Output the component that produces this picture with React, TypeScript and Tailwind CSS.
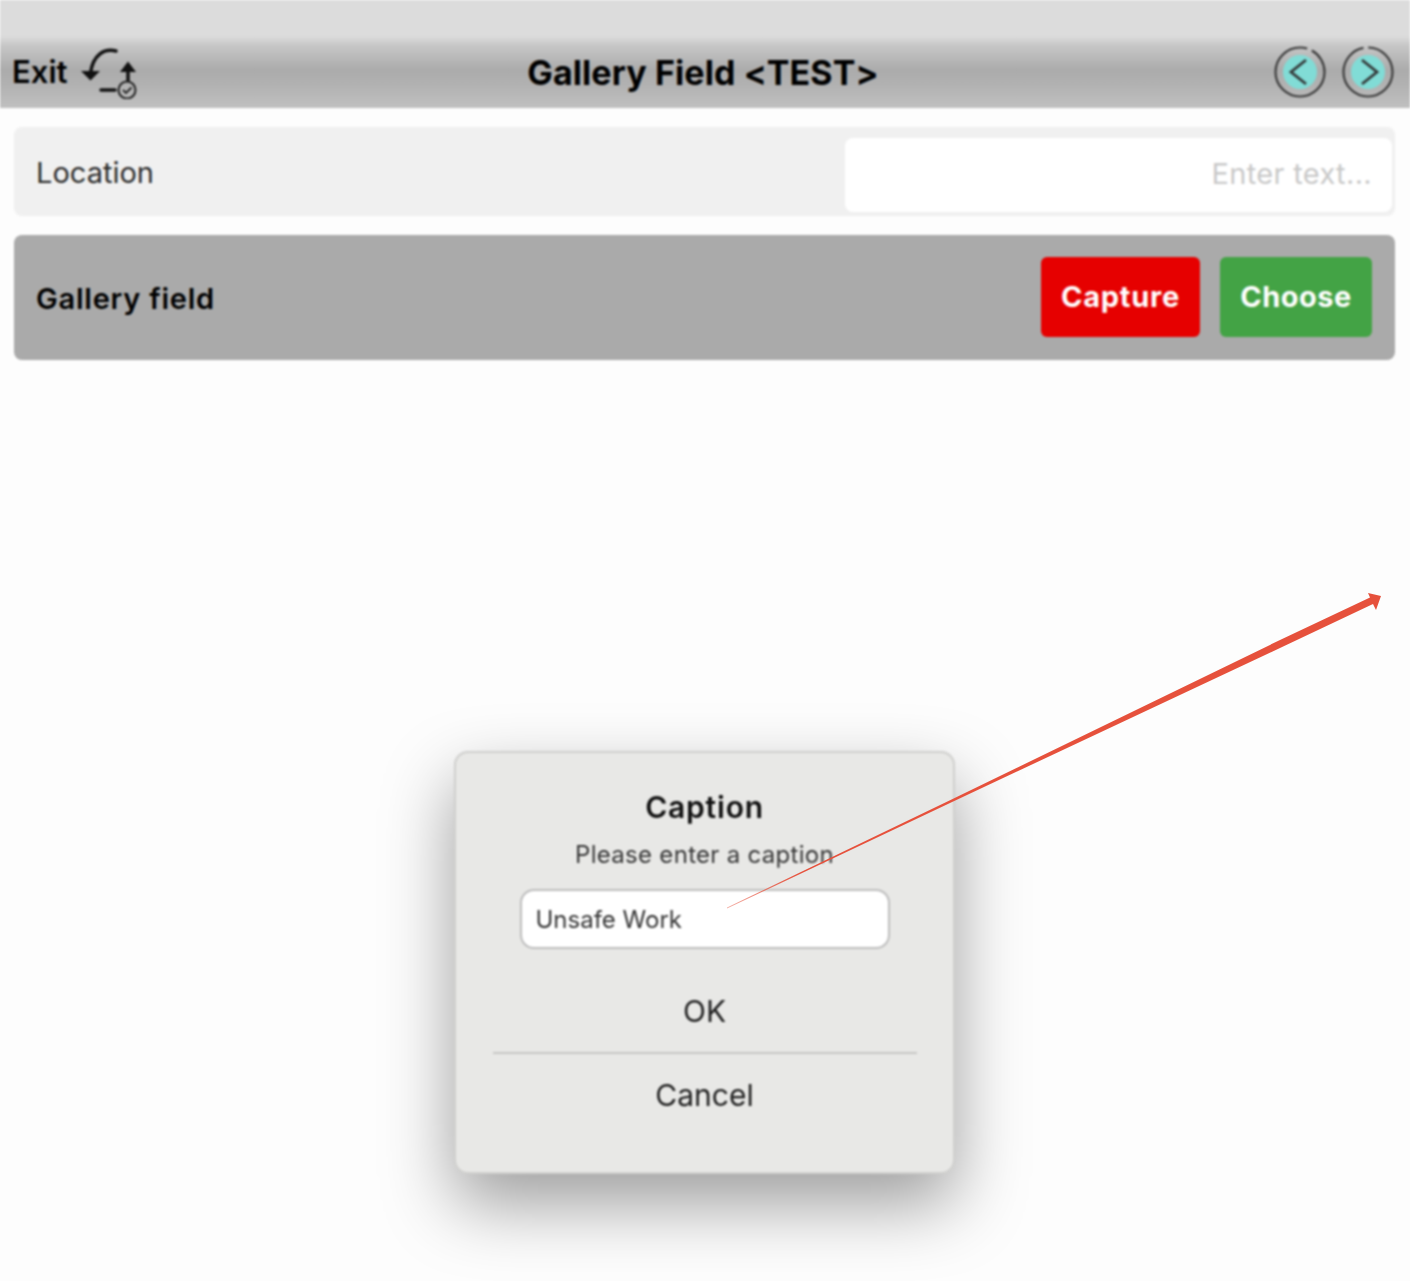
import { useState } from 'react';

function SyncIcon() {
  return (
    <svg width="60" height="54" viewBox="0 0 60 54" fill="none" className="shrink-0">
      <path d="M38 6C26 3 15 10 12.500 28" stroke="#111" strokeWidth="3.500" strokeLinecap="round" />
      <path d="M3 26H22L12.500 35.500Z" fill="#111" />
      <path d="M50 22V36" stroke="#111" strokeWidth="3.500" />
      <path d="M42 27L50 16.500L58 27Z" fill="#111" />
      <path d="M23 45H37" stroke="#111" strokeWidth="3.500" strokeLinecap="round" />
      <circle cx="49" cy="45" r="8.500" stroke="#222" strokeWidth="2" />
      <path d="M45 45L48 48L53.500 42.500" stroke="#222" strokeWidth="1.800" />
    </svg>
  );
}

function NavButton({ dir }: { dir: 'left' | 'right' }) {
  return (
    <svg width="52" height="52" viewBox="0 0 52 52" fill="none">
      <circle cx="26" cy="26" r="24.500" stroke="#3c3c3c" strokeWidth="2.200" strokeDasharray={dir === 'left' ? '122 5' : '110 5'} />
      <circle cx="26" cy="26" r="17" fill="#81dcd6" />
      {dir === 'left' ? (
        <path d="M32 14L17 26L32 38" stroke="#333838" strokeWidth="2.800" />
      ) : (
        <path d="M20 14L35 26L20 38" stroke="#333838" strokeWidth="2.800" />
      )}
    </svg>
  );
}

export default function App() {
  const [caption, setCaption] = useState('Unsafe Work');

  return (
    <div className="relative w-[1410px] h-[1281px] overflow-hidden bg-[#fdfdfd] font-['Inter',sans-serif]">
      <div className="blur-[0.8px]">
        <header className="h-[108px] pt-[38px] bg-[linear-gradient(#dcdcdc_0,#dcdcdc_36px,#c6c6c6_46px,#ababab_70px,#b2b2b2_85px,#c0c0c0_108px)] flex items-center justify-between pl-3 pr-[16px]">
          <div className="flex items-center gap-[11px] w-[360px] -mt-0.5">
            <span className="text-[31px] font-semibold text-black">Exit</span>
            <SyncIcon />
          </div>
          <h1 className="-mt-0.5 text-[34px] font-bold tracking-[0.1px] text-black whitespace-nowrap">Gallery Field &lt;TEST&gt;</h1>
          <div className="flex items-center justify-end gap-4 w-[360px] -mt-0.5">
            <NavButton dir="left" />
            <NavButton dir="right" />
          </div>
        </header>

        <main className="flex flex-col gap-[19px] pt-[19px] pl-[14px] pr-[15px]">
          <div className="h-[89px] rounded-lg bg-[#f0f0f0] flex items-end justify-between pb-1 pl-[22px] pr-[3px]">
            <span className="self-center mt-[6px] text-[29px] text-[#2c2c2c]">Location</span>
            <div className="w-[547px] h-[74px] rounded-lg bg-white flex items-center justify-end pb-[2px] pr-5 text-[29px] tracking-[0.33px] text-[#c8c8c8]">Enter text...</div>
          </div>

          <div className="h-[125px] rounded-lg bg-[#aaaaaa] flex items-center justify-between pl-[22px] pr-[23px]">
            <span className="mt-0.5 text-[29px] font-semibold tracking-[0.77px] text-black">Gallery field</span>
            <div className="flex gap-[20px] -mt-0.5">
              <button className="w-[159px] h-20 rounded-md bg-[#e60000] text-white text-[29px] font-bold tracking-[0.8px]">Capture</button>
              <button className="w-[152px] h-20 rounded-md bg-[#43a345] text-white text-[29px] font-bold tracking-[0.5px]">Choose</button>
            </div>
          </div>
        </main>

        <div className="absolute left-[454px] top-[751px] w-[501px] h-[423px] rounded-[14px] border-2 border-[#cfcfcd] bg-[#e8e8e6] shadow-[0_30px_70px_rgba(0,0,0,0.38)] flex flex-col items-center pt-[32px]">
          <div className="text-[30px] leading-[44px] font-semibold tracking-[0.8px] text-[#111]">Caption</div>
          <div className="mt-[9px] text-[24px] leading-[34px] tracking-[0.3px] text-[#363636]">Please enter a caption</div>
          <input
            value={caption}
            onChange={(e) => setCaption(e.target.value)}
            className="mt-[17px] w-[370px] h-[60px] shrink-0 rounded-[14px] border-2 border-[#bdbdbd] bg-white px-[14px] text-[24px] text-[#333] outline-none"
          />
          <button className="mt-[40px] h-[44px] text-[30px] text-[#1f1f1f]">OK</button>
          <div className="mt-[19px] w-[424px] h-[2px] bg-[#c6c6c4]" />
          <button className="mt-[19px] h-[44px] text-[30px] text-[#1f1f1f]">Cancel</button>
        </div>
      </div>

      <svg className="absolute inset-0 pointer-events-none" width="1410" height="1281" viewBox="0 0 1410 1281" fill="none">
        <defs>
          <linearGradient id="tail" x1="727" y1="908" x2="800" y2="873" gradientUnits="userSpaceOnUse">
            <stop offset="0" stopColor="#e6513c" stopOpacity="0.45" />
            <stop offset="1" stopColor="#e6513c" />
          </linearGradient>
        </defs>
        <path d="M727 907.600L950 800.300L1280 640L1370 597.500L1368 593L1381 596L1376 610L1373 604L1280 648L950 803L727 908.600Z" fill="url(#tail)" />
      </svg>
    </div>
  );
}
